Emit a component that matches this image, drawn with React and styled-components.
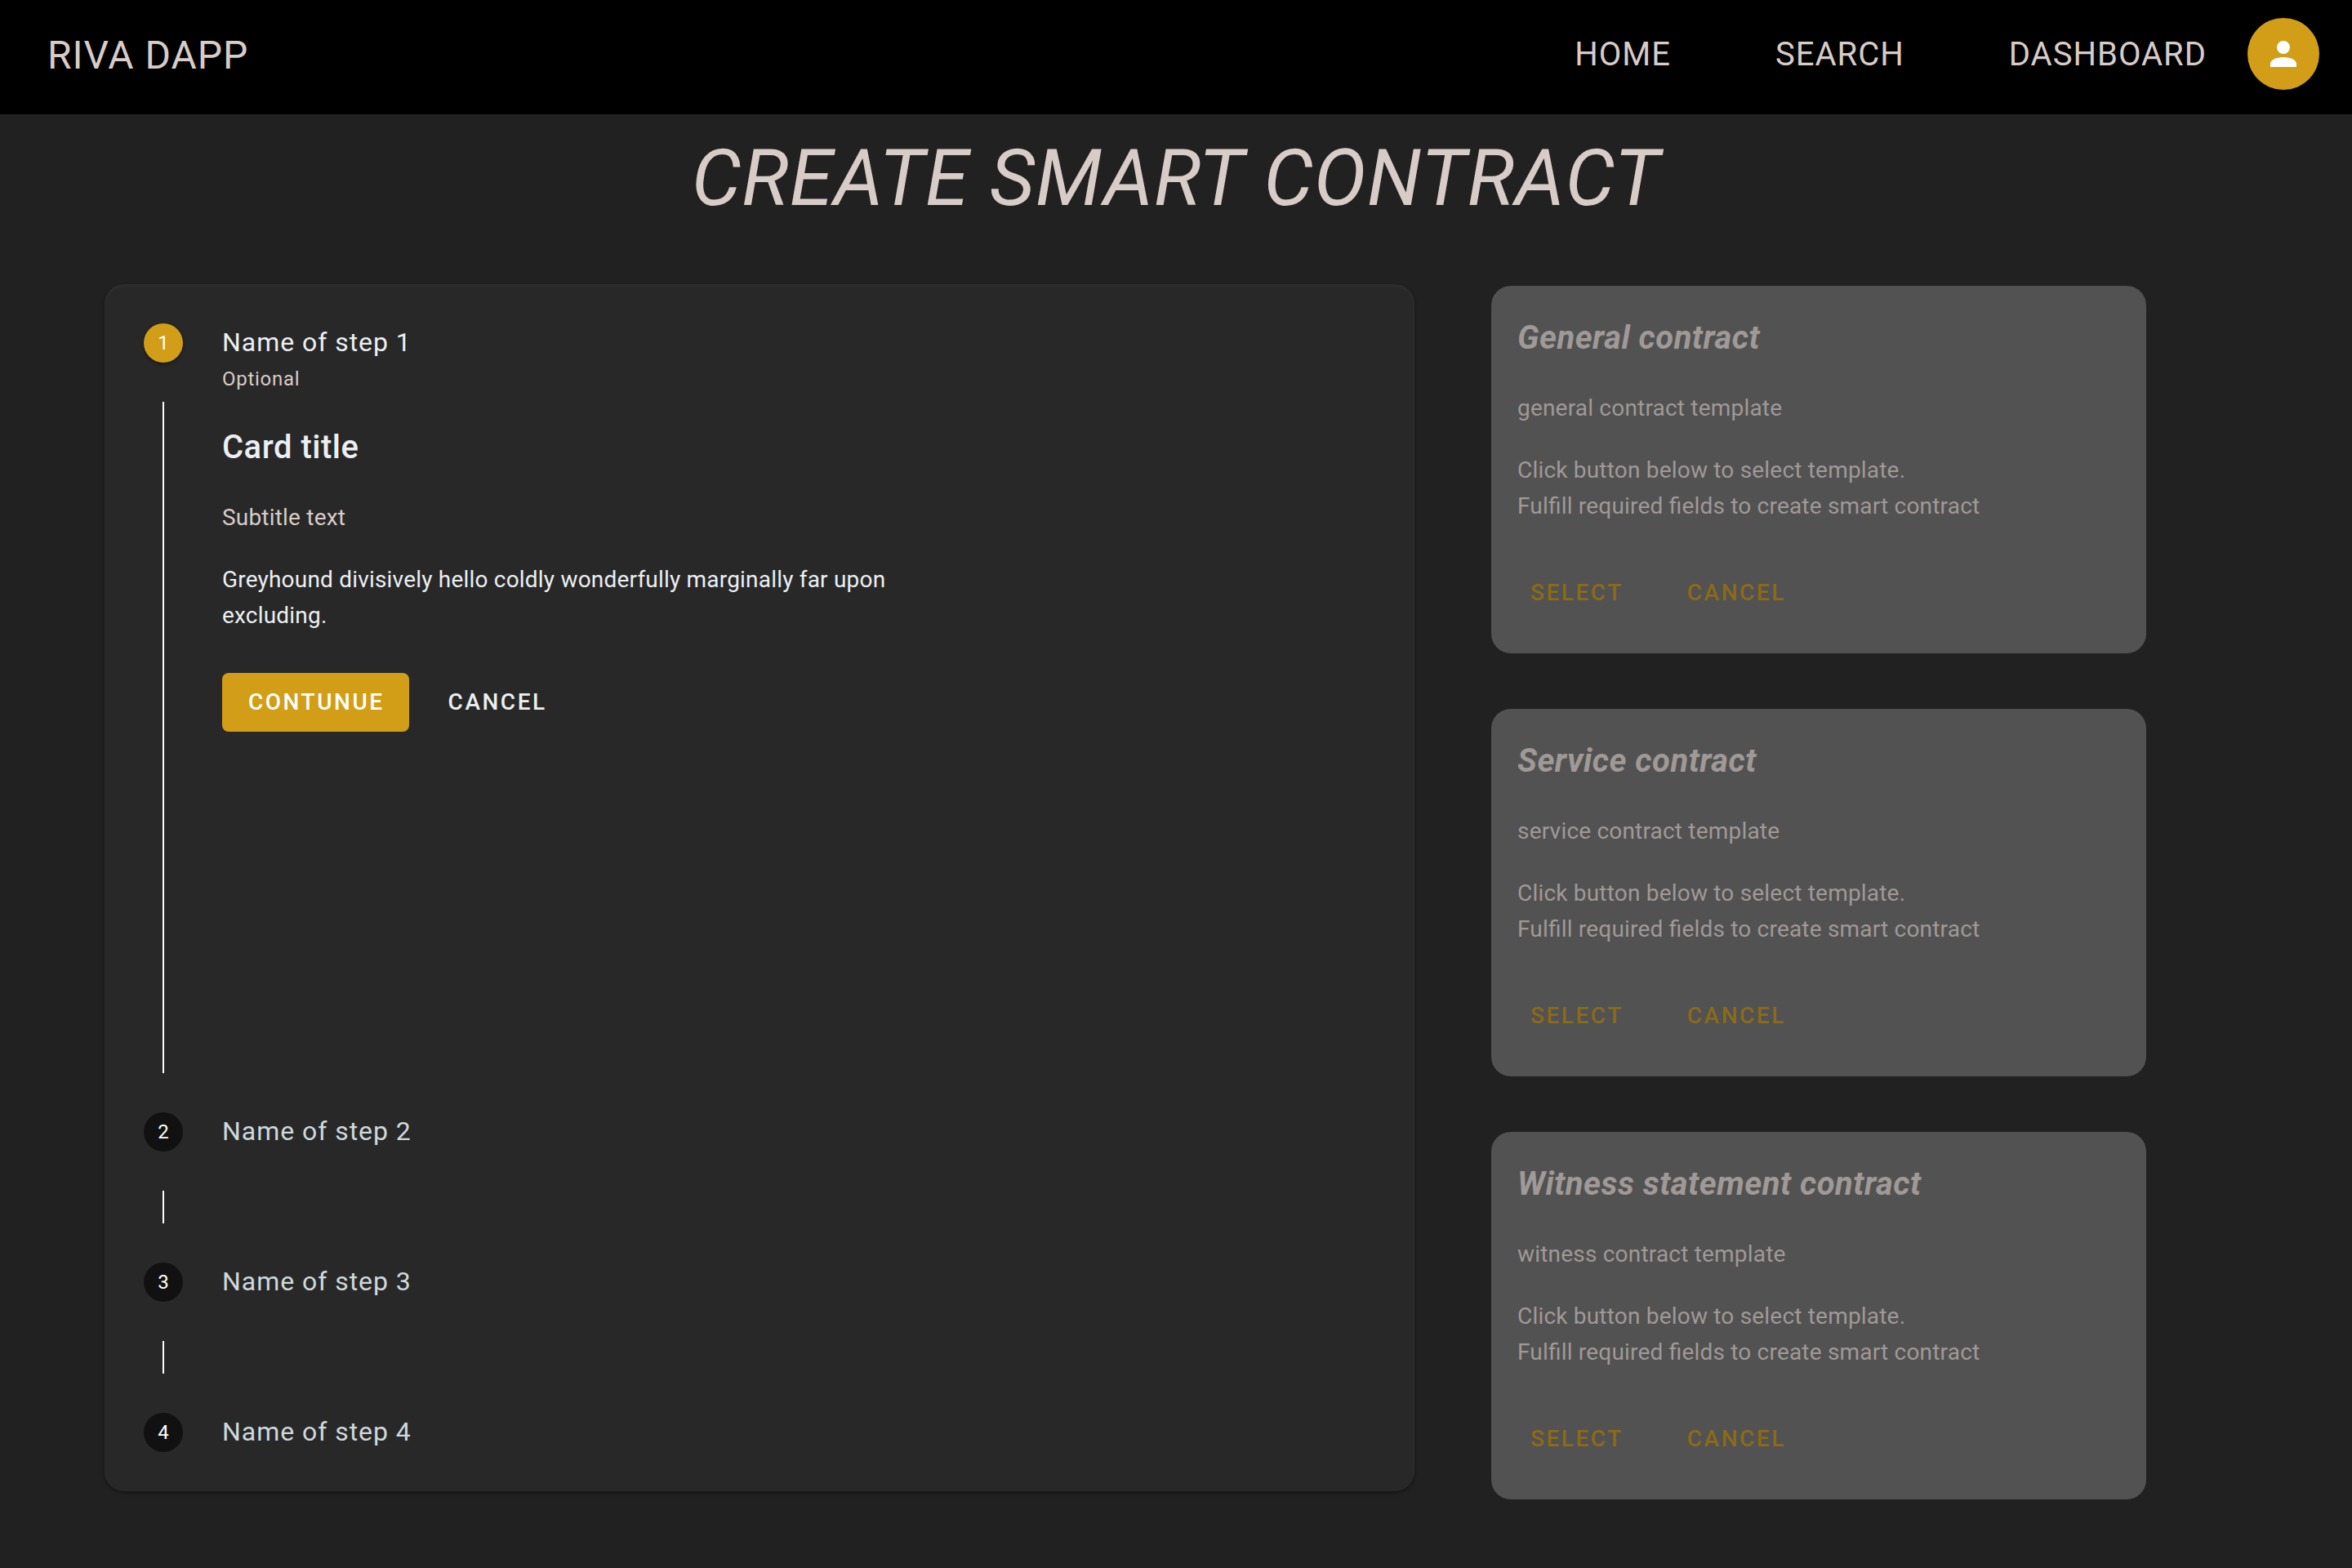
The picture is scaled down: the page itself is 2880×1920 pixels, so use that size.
import React from 'react';
import styled, { createGlobalStyle } from 'styled-components';

const GlobalStyle = createGlobalStyle`
  * {
    box-sizing: border-box;
  }
  body {
    margin: 0;
    min-height: 100vh;
    background: #212121;
    color: #eceff1;
    font-family: Roboto, "Liberation Sans", sans-serif;
    font-size: 28px;
    line-height: 44px;
    font-feature-settings: "liga" 1;
  }
  h1, h2, h3, p, ol {
    margin: 0;
    padding: 0;
  }
`;

const Header = styled.header`
  display: flex;
  align-items: center;
  justify-content: space-between;
  min-height: 140px;
  padding: 0 40px 8px 58px;
  background: #000;
  color: #d7ccc8;
`;

const Brand = styled.a`
  padding-top: 4px;
  color: inherit;
  font-size: 48px;
  line-height: 64px;
  letter-spacing: 0.02em;
  text-decoration: none;
`;

const Nav = styled.nav`
  display: flex;
  align-items: center;
`;

const NavLink = styled.a`
  padding: 2px 64px 0;
  color: inherit;
  font-size: 40px;
  line-height: 64px;
  letter-spacing: 0.025em;
  text-decoration: none;

  &:last-of-type {
    padding-right: 50px;
  }
`;

const AvatarButton = styled.button`
  display: flex;
  align-items: center;
  justify-content: center;
  width: 88px;
  height: 88px;
  padding: 0;
  border: 0;
  border-radius: 50%;
  background: #d29e18;
  color: #fff;

  svg {
    width: 48px;
    height: 48px;
    fill: currentColor;
  }
`;

const PageTitle = styled.h1`
  padding: 28px 0 80px;
  color: #d7ccc8;
  font-size: 96px;
  font-style: italic;
  font-weight: 400;
  line-height: 100px;
  letter-spacing: 0.011em;
  text-align: center;
`;

const Columns = styled.main`
  display: grid;
  grid-template-columns: 2fr 1fr;
  align-items: start;
  gap: 94px;
  padding: 0 252px 84px 128px;
`;

const Stepper = styled.ol`
  padding: 48px;
  border-radius: 24px;
  background: #282828;
  list-style: none;
  box-shadow: inset 0 2px 4px rgba(255, 255, 255, 0.05), 0 2px 4px rgba(0, 0, 0, 0.4);
`;

const Step = styled.li`
  display: flex;
  gap: 48px;
  color: ${(p) => (p.$active ? '#eceff1' : '#cfd8dc')};
`;

const Rail = styled.div`
  display: flex;
  flex-direction: column;
  align-items: center;
  flex: none;
  width: 48px;
`;

const StepNumber = styled.span`
  width: 48px;
  height: 48px;
  border-radius: 50%;
  background: ${(p) => (p.$active ? '#d29e18' : '#111')};
  box-shadow: ${(p) => (p.$active ? '0 2px 4px rgba(0, 0, 0, 0.4)' : 'none')};
  color: #fff;
  font-size: 24px;
  line-height: 48px;
  text-align: center;
`;

const Connector = styled.span`
  flex: 1;
  width: 2px;
  min-height: 40px;
  margin: 48px 0;
  background: #fff;
`;

const StepBody = styled.div`
  flex: 1;
  min-height: ${(p) => (p.$open ? '966px' : '0')};
`;

const StepName = styled.h2`
  font-size: 32px;
  font-weight: 400;
  line-height: 46px;
  letter-spacing: 0.03em;
`;

const StepHint = styled.p`
  color: #d7ccc8;
  font-size: 24px;
  line-height: 44px;
  letter-spacing: 0.03em;
`;

const StepContent = styled.div`
  max-width: 860px;
  padding-top: 30px;
`;

const CardTitle = styled.h3`
  margin-bottom: 32px;
  font-size: 40px;
  font-style: ${(p) => (p.$strong ? 'italic' : 'normal')};
  font-weight: ${(p) => (p.$strong ? 700 : 500)};
  line-height: 64px;
  letter-spacing: 0.0125em;
`;

const Subtitle = styled.p`
  margin-bottom: 32px;
  color: ${(p) => (p.$muted ? 'inherit' : '#d7ccc8')};
  letter-spacing: 0.007em;
`;

const Text = styled.p`
  letter-spacing: 0.007em;
`;

const Actions = styled.div`
  display: flex;
  gap: 16px;
  padding-top: 48px;
`;

const Button = styled.button`
  height: 72px;
  padding: 0 30px 0 32px;
  border: 0;
  border-radius: 8px;
  background: ${(p) => (p.$filled ? '#d29e18' : 'transparent')};
  color: ${(p) => (p.$filled ? '#fff' : 'inherit')};
  font: inherit;
  font-weight: 500;
  letter-spacing: 0.09em;
`;

const Templates = styled.section`
  display: flex;
  flex-direction: column;
  gap: 68px;
  padding-top: 2px;
`;

const TemplateCard = styled.article`
  padding: 32px 32px 38px;
  border-radius: 24px;
  background: #525252;
  color: #9f9997;

  ${Actions} {
    margin-left: -16px;
    color: #8b6a18;
  }
`;

const templates = [
  { title: 'General contract', subtitle: 'general contract template' },
  { title: 'Service contract', subtitle: 'service contract template' },
  { title: 'Witness statement contract', subtitle: 'witness contract template' },
];

const steps = [1, 2, 3, 4];

function PersonIcon() {
  return (
    <svg viewBox="0 0 24 24" aria-hidden="true">
      <path d="M12 4a4 4 0 0 1 4 4 4 4 0 0 1-4 4 4 4 0 0 1-4-4 4 4 0 0 1 4-4m0 10c4.42 0 8 1.79 8 4v2H4v-2c0-2.21 3.58-4 8-4z" />
    </svg>
  );
}

export default function App() {
  return (
    <>
      <GlobalStyle />
      <Header>
        <Brand href="#">RIVA DAPP</Brand>
        <Nav>
          <NavLink href="#home">HOME</NavLink>
          <NavLink href="#search">SEARCH</NavLink>
          <NavLink href="#dashboard">DASHBOARD</NavLink>
          <AvatarButton type="button" aria-label="Account">
            <PersonIcon />
          </AvatarButton>
        </Nav>
      </Header>
      <PageTitle>CREATE SMART CONTRACT</PageTitle>
      <Columns>
        <Stepper>
          {steps.map((n) => {
            const active = n === 1;
            return (
              <Step key={n} $active={active}>
                <Rail>
                  <StepNumber $active={active}>{n}</StepNumber>
                  {n < steps.length && <Connector />}
                </Rail>
                <StepBody $open={active}>
                  <StepName>Name of step {n}</StepName>
                  {active && (
                    <>
                      <StepHint>Optional</StepHint>
                      <StepContent>
                        <CardTitle>Card title</CardTitle>
                        <Subtitle>Subtitle text</Subtitle>
                        <Text>
                          Greyhound divisively hello coldly wonderfully marginally far upon excluding.
                        </Text>
                        <Actions>
                          <Button type="button" $filled>CONTUNUE</Button>
                          <Button type="button">CANCEL</Button>
                        </Actions>
                      </StepContent>
                    </>
                  )}
                </StepBody>
              </Step>
            );
          })}
        </Stepper>
        <Templates>
          {templates.map((t) => (
            <TemplateCard key={t.title}>
              <CardTitle $strong>{t.title}</CardTitle>
              <Subtitle $muted>{t.subtitle}</Subtitle>
              <Text>
                Click button below to select template.
                <br />
                Fulfill required fields to create smart contract
              </Text>
              <Actions>
                <Button type="button">SELECT</Button>
                <Button type="button">CANCEL</Button>
              </Actions>
            </TemplateCard>
          ))}
        </Templates>
      </Columns>
    </>
  );
}
